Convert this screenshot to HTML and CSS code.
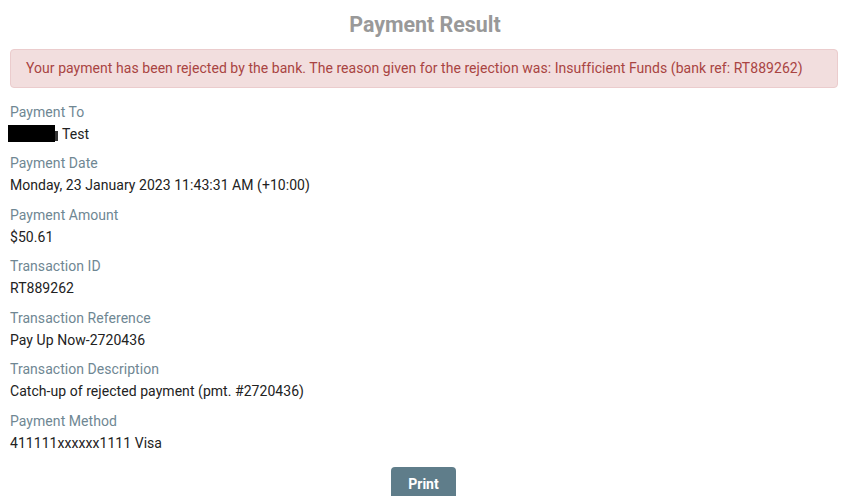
FILE: index.html
```html
<!DOCTYPE html>
<html>
<head>
<meta charset="utf-8">
<link rel="stylesheet" href="styles.css">
</head>
<body>
<div class="page">
  <h1 class="title">Payment Result</h1>
  <div class="alert">Your payment has been rejected by the bank. The reason given for the rejection was: Insufficient Funds (bank ref: RT889262)</div>
  <dl class="details">
    <dt>Payment To</dt>
    <dd><span class="redact"></span>Test</dd>
    <dt>Payment Date</dt>
    <dd>Monday, 23 January 2023 11:43:31 AM (+10:00)</dd>
    <dt>Payment Amount</dt>
    <dd>$50.61</dd>
    <dt>Transaction ID</dt>
    <dd>RT889262</dd>
    <dt>Transaction Reference</dt>
    <dd>Pay Up Now-2720436</dd>
    <dt>Transaction Description</dt>
    <dd>Catch-up of rejected payment (pmt. #2720436)</dd>
    <dt>Payment Method</dt>
    <dd>411111xxxxxx1111 Visa</dd>
  </dl>
  <div class="actions"><button class="btn">Print</button></div>
</div>
</body>
</html>
```
FILE: styles.css
```css
html, body { margin: 0; padding: 0; background: #fff; }
body { font-family: Roboto, "Liberation Sans", sans-serif; font-size: 14px; letter-spacing: 0.05px; color: #222; }
.page { padding: 0 10px; }
.title { margin: 0; padding-top: 12px; height: 37px; text-align: center; font-size: 21.4px; font-weight: 700; color: #999; line-height: 26px; letter-spacing: 0; }
.alert { background: #f2dede; border: 1px solid #ebcccd; color: #a94442; border-radius: 4px; padding: 10px 15px; line-height: 17px; margin-right: 2px; }
.details { margin: 12.5px 0 0; }
.details dt { color: #6f8793; line-height: 22px; height: 22px; }
.details dd { margin: 0; line-height: 22px; height: 29.5px; }
.redact { display: inline-block; width: 47px; height: 17px; background: #000; vertical-align: -3px; margin-left: -2px; margin-right: 7px; position: relative; }
.redact::after { content: ""; position: absolute; left: 47px; top: 6px; width: 3px; height: 10px; background: #333; }
.actions { text-align: center; padding-top: 6px; }
.btn { background: #5f7d8a; color: #fff; border: 0; border-radius: 4px; font-family: Roboto, "Liberation Sans", sans-serif; font-weight: 700; font-size: 14px; width: 65px; height: 34px; margin-left: -3px; }
```
